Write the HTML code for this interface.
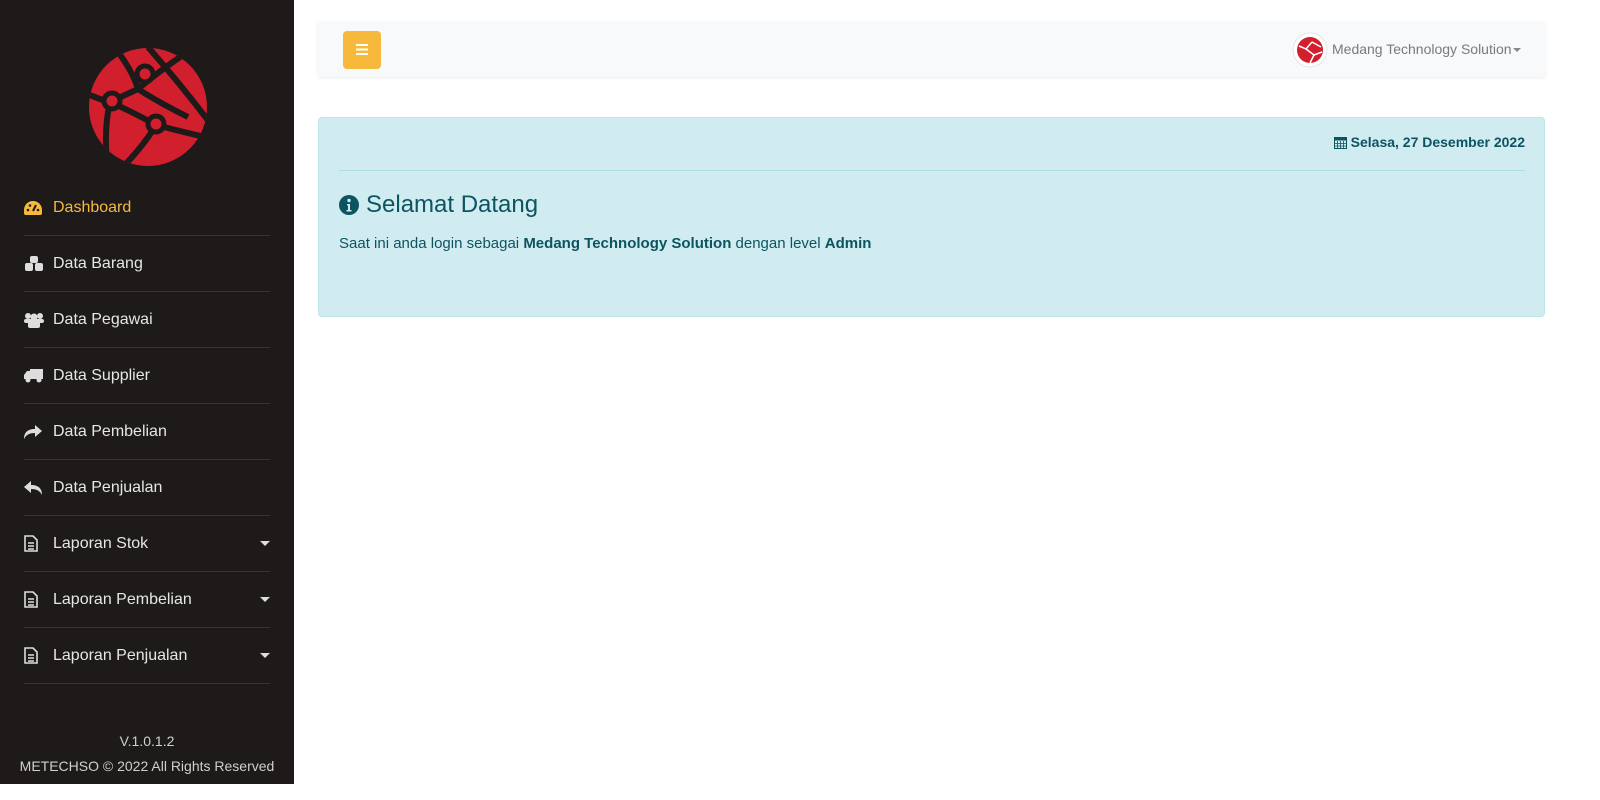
<!DOCTYPE html>
<html><head><meta charset="utf-8"><style>
*{box-sizing:border-box;margin:0;padding:0}
body{width:1600px;height:800px;overflow:hidden;font-family:"Liberation Sans",Roboto,sans-serif;background:#fff;position:relative}
.sb{position:absolute;left:0;top:0;width:294px;height:784px;background:#1e1a1a}
.item{position:absolute;left:24px;width:246px;height:56px;border-bottom:1px solid #393434;color:#e6e6e6;font-size:16px;display:flex;align-items:center}
.item .ic{width:29px;display:inline-flex;align-items:center}
.item .car{position:absolute;right:0;top:25px;border-left:5px solid transparent;border-right:5px solid transparent;border-top:5px solid #ddd}
.foot{position:absolute;width:294px;text-align:center;color:#cfcfcf;font-size:14px}
.nav{position:absolute;left:318px;top:22px;width:1227px;height:55px;background:#f8f9fa;box-shadow:0 1px 3px rgba(0,0,0,.08)}
.btn{position:absolute;left:25px;top:9px;width:38px;height:38px;background:#f6b93b;border-radius:4px}
.alert{position:absolute;left:318px;top:117px;width:1227px;height:200px;background:#d1ecf1;border:1px solid #bee5eb;border-radius:4px;color:#0c5460}
</style></head><body>
<div class="sb">
<svg style="position:absolute;left:88px;top:47px" width="120" height="120" viewBox="0 0 120 120">
<defs><clipPath id="c"><circle cx="60" cy="60" r="59"/></clipPath></defs>
<circle cx="60" cy="60" r="59" fill="#d11f2d"/>
<g clip-path="url(#c)" stroke="#1e1a1a" stroke-width="6" fill="none">
<path d="M-5 45 Q10 52 22 55"/><path d="M22 55 L50 42"/><path d="M50 42 Q70 25 95 8"/>
<path d="M30 5 Q45 25 50 42"/><path d="M50 42 Q70 55 100 70"/>
<path d="M22 55 Q45 65 68 78"/><path d="M68 78 Q95 85 125 92"/><path d="M68 78 Q55 100 30 125"/>
<path d="M22 55 Q15 85 20 125"/><path d="M60 0 Q95 40 125 80"/>
</g>
<g fill="#d11f2d" stroke="#1e1a1a" stroke-width="5"><circle cx="57" cy="27" r="8"/><circle cx="24" cy="54" r="8"/><circle cx="68" cy="77" r="8"/></g>
</svg>
<div class="item" style="top:180px;color:#f6b93b"><span class="ic"><svg width="18" height="14" viewBox="0 0 18 14"><path d="M9 0A9 9 0 0 0 0 9v3a2 2 0 0 0 2 2h14a2 2 0 0 0 2-2V9A9 9 0 0 0 9 0z" fill="#f6b93b"/><circle cx="4" cy="9" r="1.3" fill="#1e1a1a"/><circle cx="6" cy="4.5" r="1.3" fill="#1e1a1a"/><circle cx="14" cy="9" r="1.3" fill="#1e1a1a"/><path d="M9 10L12 4" stroke="#1e1a1a" stroke-width="2"/></svg></span>Dashboard</div>
<div class="item" style="top:236px"><span class="ic"><svg width="20" height="16" viewBox="0 0 20 16" fill="#ddd"><rect x="6" y="0" width="8" height="7" rx="2"/><rect x="1" y="7" width="8" height="8" rx="2"/><rect x="11" y="7" width="8" height="8" rx="2"/></svg></span>Data Barang</div>
<div class="item" style="top:292px"><span class="ic"><svg width="20" height="16" viewBox="0 0 20 16" fill="#ddd"><circle cx="4" cy="4" r="3"/><circle cx="16" cy="4" r="3"/><circle cx="10" cy="5" r="3.5"/><rect x="0" y="7" width="20" height="4" rx="2"/><rect x="4" y="9" width="12" height="7" rx="2"/></svg></span>Data Pegawai</div>
<div class="item" style="top:348px"><span class="ic"><svg width="19" height="14" viewBox="0 0 19 14" fill="#ddd"><rect x="6" y="0" width="13" height="10"/><path d="M0 6L3 2h3v8H0z"/><circle cx="4" cy="11" r="2.5"/><circle cx="15" cy="11" r="2.5"/></svg></span>Data Supplier</div>
<div class="item" style="top:404px"><span class="ic"><svg width="18" height="14" viewBox="0 0 18 14" fill="#ddd"><path d="M11 0l7 6-7 6V8C5 8 2 10 0 14 0 8 3 4 11 4z"/></svg></span>Data Pembelian</div>
<div class="item" style="top:460px"><span class="ic"><svg width="18" height="14" viewBox="0 0 18 14" fill="#ddd"><path d="M7 0L0 6l7 6V8c6 0 9 2 11 6 0-6-3-10-11-10z"/></svg></span>Data Penjualan</div>
<div class="item" style="top:516px"><span class="ic"><svg width="14" height="17" viewBox="0 0 14 17" fill="none" stroke="#ddd" stroke-width="1.6"><path d="M1 1h8l4 4v11H1z"/><path d="M4 8h6M4 11h6M4 14h6"/></svg></span>Laporan Stok<span class="car"></span></div>
<div class="item" style="top:572px"><span class="ic"><svg width="14" height="17" viewBox="0 0 14 17" fill="none" stroke="#ddd" stroke-width="1.6"><path d="M1 1h8l4 4v11H1z"/><path d="M4 8h6M4 11h6M4 14h6"/></svg></span>Laporan Pembelian<span class="car"></span></div>
<div class="item" style="top:628px"><span class="ic"><svg width="14" height="17" viewBox="0 0 14 17" fill="none" stroke="#ddd" stroke-width="1.6"><path d="M1 1h8l4 4v11H1z"/><path d="M4 8h6M4 11h6M4 14h6"/></svg></span>Laporan Penjualan<span class="car"></span></div>
<div class="foot" style="top:733px">V.1.0.1.2</div>
<div class="foot" style="top:758px">METECHSO © 2022 All Rights Reserved</div>
</div>
<div class="nav">
<div class="btn"><svg style="position:absolute;left:13px;top:13px" width="12" height="11" viewBox="0 0 12 11" fill="#fff"><rect y="0" width="12" height="2"/><rect y="4.5" width="12" height="2"/><rect y="9" width="12" height="2"/></svg></div>
<svg style="position:absolute;left:974px;top:10px" width="36" height="36" viewBox="0 0 36 36"><circle cx="18" cy="18" r="17" fill="#fff" stroke="#e5e5e5"/><circle cx="18" cy="18" r="13" fill="#d11f2d"/><g stroke="#fff" stroke-width="1.5" fill="none"><path d="M7 14L14 17L20 10M14 17L22 23L30 20M22 23L18 31M20 10L29 15"/></g></svg>
<div style="position:absolute;left:1014px;top:19px;font-size:14px;color:#7a7a7a">Medang Technology Solution</div>
<div style="position:absolute;left:1195px;top:26px;border-left:4px solid transparent;border-right:4px solid transparent;border-top:4px solid #888"></div>
</div>
<div class="alert">
<div style="position:absolute;right:19px;top:16px;font-size:14px;font-weight:bold;display:flex;align-items:center;gap:4px"><svg width="13" height="13" viewBox="0 0 13 13"><rect x="0.5" y="1.5" width="12" height="11" fill="none" stroke="#0c5460"/><rect x="0.5" y="1.5" width="12" height="3" fill="#0c5460"/><path d="M3.5 5v7M6.5 5v7M9.5 5v7M1 7.5h11M1 10h11" stroke="#0c5460" stroke-width=".8"/></svg>Selasa, 27 Desember 2022</div>
<div style="position:absolute;left:20px;right:19px;top:52px;border-top:1px solid #abdde5"></div>
<div style="position:absolute;left:20px;top:73px;font-size:24px;display:flex;align-items:center;gap:7px"><svg width="20" height="20" viewBox="0 0 20 20"><circle cx="10" cy="10" r="10" fill="#0c5460"/><circle cx="10" cy="5.5" r="1.7" fill="#d1ecf1"/><path d="M8 9h3v6h1.5v1.5h-5V15H9v-4.5H8z" fill="#d1ecf1"/></svg>Selamat Datang</div>
<div style="position:absolute;left:20px;top:117px;font-size:15px">Saat ini anda login sebagai <b>Medang Technology Solution</b> dengan level <b>Admin</b></div>
</div>
</body></html>
